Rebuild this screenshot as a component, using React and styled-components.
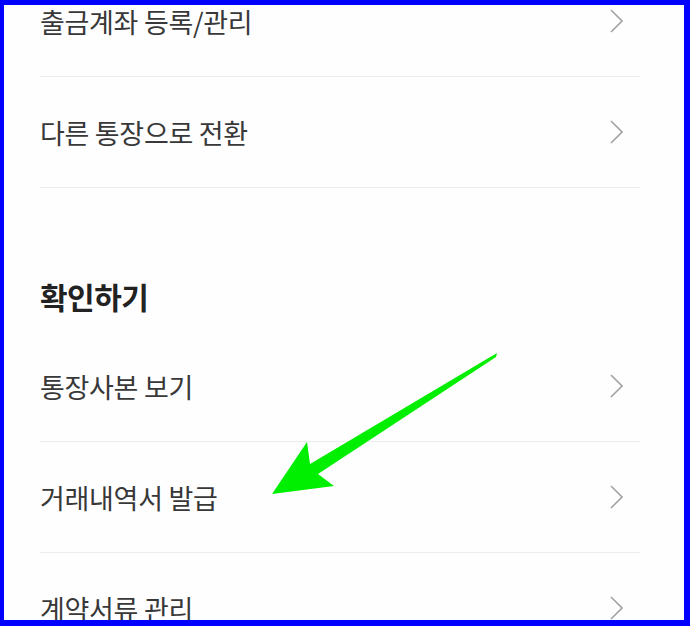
import React from 'react'
import styled, { createGlobalStyle } from 'styled-components'

const GlobalStyle = createGlobalStyle`
  html, body {
    margin: 0;
    padding: 0;
    background: #ffffff;
  }
  body {
    font-family: "Noto Sans CJK KR", "Noto Sans", sans-serif;
  }
`

const Frame = styled.div`
  position: relative;
  width: 690px;
  height: 626px;
  box-sizing: border-box;
  border-style: solid;
  border-color: #0000fe;
  border-width: 5px 6px 6px 4px;
  background: #fefefe;
  overflow: hidden;
`

// the list is scrolled a bit, so the first row is cut at the top
const List = styled.div`
  margin-top: -39px;
  padding: 0 44px 0 36px;
`

const SectionTitle = styled.h2`
  margin: 0;
  padding: 88px 0 15px;
  font-size: 30px;
  line-height: 40px;
  font-weight: 700;
  color: #222;
  letter-spacing: -0.5px;
`

const Row = styled.div`
  display: flex;
  align-items: center;
  justify-content: space-between;
  height: 111px;
  box-sizing: border-box;
  border-bottom: 1px solid ${props => (props.last ? 'transparent' : '#ececec')};
  cursor: pointer;
`

const Label = styled.span`
  font-size: 27px;
  font-weight: 400;
  color: #383838;
  letter-spacing: -0.3px;
`

const Chevron = styled.svg`
  width: 13px;
  height: 24px;
  margin-right: 17px;
  flex-shrink: 0;
`

const Arrow = styled.svg`
  position: absolute;
  top: -5px;
  left: -4px;
  width: 690px;
  height: 626px;
  pointer-events: none;
`

function MenuRow({ label, last }) {
  return (
    <Row last={last}>
      <Label>{label}</Label>
      <Chevron viewBox="0 0 13 24">
        <polyline points="1,1 12,12 1,23" fill="none" stroke="#a3a3a3" strokeWidth="1.6" />
      </Chevron>
    </Row>
  )
}

export default function App() {
  return (
    <>
      <GlobalStyle />
      <Frame>
        <List>
          <MenuRow label="출금계좌 등록/관리" />
          <MenuRow label="다른 통장으로 전환" />
          <SectionTitle>확인하기</SectionTitle>
          <MenuRow label="통장사본 보기" />
          <MenuRow label="거래내역서 발급" />
          <MenuRow label="계약서류 관리" last />
        </List>
        <Arrow viewBox="0 0 690 626">
          <polygon
            fill="#00ee00"
            points="497,353 310,464 307,442 272,494 334,486 318,474 496,357"
          />
        </Arrow>
      </Frame>
    </>
  )
}
